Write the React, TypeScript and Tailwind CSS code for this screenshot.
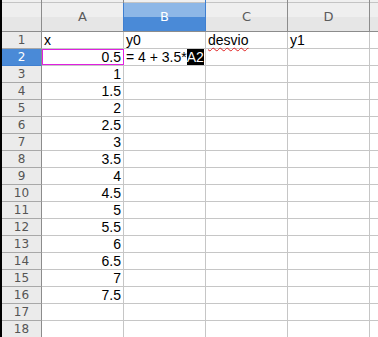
const cols = ["A", "B", "C", "D"];
const xs = ["", "0.5", "1", "1.5", "2", "2.5", "3", "3.5", "4", "4.5", "5", "5.5", "6", "6.5", "7", "7.5", "", ""];

function Cell({ children, right, className = "" }: { children?: React.ReactNode; right?: boolean; className?: string }) {
  return (
    <div
      className={`relative w-[82px] shrink-0 border-r border-[#c6c6c6] h-full flex items-center px-[2px] ${right ? "justify-end" : ""} ${className}`}
    >
      {children}
    </div>
  );
}

export default function App() {
  return (
    <div className="flex w-[378px] h-[337px] overflow-hidden bg-white font-['Liberation_Sans',Arial,sans-serif] text-[14px] leading-[16px] text-black">
      {/* black window edge */}
      <div className="w-[2px] shrink-0 bg-black" />
      <div className="flex flex-col flex-1 overflow-hidden">
        {/* column header */}
        <div className="flex h-[32px] shrink-0 border-b border-[#8c8c8c] bg-[#f0f0f0]">
          <div className="w-[40px] shrink-0 border-r border-[#8c8c8c] flex flex-col">
            <div className="h-[3px] border-b border-[#c4c4c4]" />
            <div className="flex-1 bg-[linear-gradient(#eeeeee_50%,#e6e6e6_50%)]" />
          </div>
          {cols.map((c) => {
            const sel = c === "B";
            return (
              <div key={c} className={`w-[82px] shrink-0 border-r flex flex-col ${sel ? "border-[#3f7fd0]" : "border-[#8c8c8c]"}`}>
                <div className="h-[3px] border-b border-[#c4c4c4] bg-[#f0f0f0]" />
                <div
                  className={`flex-1 flex items-center justify-center font-['DejaVu_Sans',sans-serif] text-[13px] ${
                    sel
                      ? "bg-[linear-gradient(#8db7e7_50%,#4a8ad7_50%)] text-white border-l border-[#3f7fd0] -ml-px"
                      : "bg-[linear-gradient(#efefef_50%,#e6e6e6_50%)] text-[#5b5b5b]"
                  }`}
                >
                  {c}
                </div>
              </div>
            );
          })}
          <div className="flex-1 flex flex-col">
            <div className="h-[3px] border-b border-[#c4c4c4]" />
            <div className="flex-1 bg-[linear-gradient(#efefef_50%,#e6e6e6_50%)]" />
          </div>
        </div>

        {/* rows */}
        {xs.map((v, i) => {
          const n = i + 1;
          const sel = n === 2;
          return (
            <div key={n} className="flex h-[17px] shrink-0">
              <div
                className={`w-[40px] shrink-0 border-r border-b flex items-center justify-center font-['DejaVu_Sans',sans-serif] text-[12px] ${
                  sel
                    ? "bg-[#4a8ad7] text-white border-r-[#8c8c8c] border-b-[#3f7fd0]"
                    : "bg-[#ebebeb] text-[#555] border-r-[#8c8c8c] border-b-[#a8a8a8]"
                }`}
              >
                {n}
              </div>
              <div className="flex flex-1 border-b border-[#c6c6c6]">
                {n === 1 ? (
                  <>
                    <Cell>x</Cell>
                    <Cell>y0</Cell>
                    <Cell>
                      <span className="underline decoration-wavy decoration-[#e02020] decoration-1 underline-offset-2">desvio</span>
                    </Cell>
                    <Cell>y1</Cell>
                  </>
                ) : n === 2 ? (
                  <>
                    <Cell right className="outline outline-[#e020e0] -outline-offset-1">
                      {v}
                    </Cell>
                    <Cell className="overflow-visible z-10">
                      <span className="whitespace-nowrap">
                        = 4 + 3.5*<span className="bg-black text-white">A2</span>
                      </span>
                    </Cell>
                    <Cell />
                    <Cell />
                  </>
                ) : (
                  <>
                    <Cell right>{v}</Cell>
                    <Cell />
                    <Cell />
                    <Cell />
                  </>
                )}
                <div className="flex-1" />
              </div>
            </div>
          );
        })}
      </div>
    </div>
  );
}
